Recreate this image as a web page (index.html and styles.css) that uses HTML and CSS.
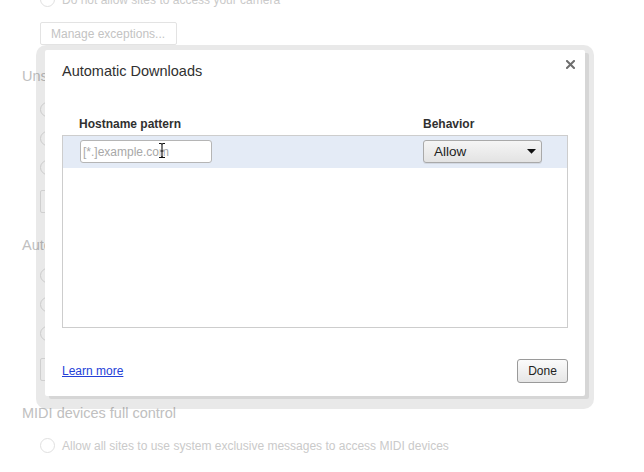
FILE: index.html
```html
<!DOCTYPE html>
<html lang="en">
<head>
<meta charset="utf-8">
<title>Automatic Downloads</title>
<link rel="stylesheet" href="styles.css">
</head>
<body>
<div class="settings">
  <div class="radio-row first"><span class="radio"></span><span>Do not allow sites to access your camera</span></div>
  <div class="ghost-btn btn-a">Manage exceptions...</div>

  <div class="section-title sec-a">Unsandboxed plugin access</div>
  <div class="radio-group grp-a">
    <div class="radio-row"><span class="radio"></span><span>Allow all sites to use a plugin to access your computer</span></div>
    <div class="radio-row"><span class="radio"></span><span>Ask when a site wants to use a plugin to access your computer</span></div>
    <div class="radio-row"><span class="radio"></span><span>Do not allow any sites to use a plugin to access your computer</span></div>
  </div>
  <div class="ghost-btn btn-b">Manage exceptions...</div>

  <div class="section-title sec-b">Automatic Downloads</div>
  <div class="radio-group grp-b">
    <div class="radio-row"><span class="radio"></span><span>Allow all sites to download multiple files automatically</span></div>
    <div class="radio-row"><span class="radio"></span><span>Ask when a site tries to download files automatically</span></div>
    <div class="radio-row"><span class="radio"></span><span>Do not allow any site to download multiple files automatically</span></div>
  </div>
  <div class="ghost-btn btn-c">Manage exceptions...</div>

  <div class="section-title sec-c">MIDI devices full control</div>
  <div class="radio-group grp-c">
    <div class="radio-row"><span class="radio"></span><span>Allow all sites to use system exclusive messages to access MIDI devices</span></div>
  </div>
</div>

<div class="frame">
  <div class="dialog">
    <h1 class="dialog-title">Automatic Downloads</h1>
    <button class="close" aria-label="Close">
      <svg width="9" height="9" viewBox="0 0 9 9"><path d="M1 1 L8 8 M8 1 L1 8" stroke="#6e6e6e" stroke-width="2" stroke-linecap="square"/></svg>
    </button>
    <div class="col-heads"><span>Hostname pattern</span><span>Behavior</span></div>
    <div class="list">
      <div class="list-row">
        <div class="cell-host">
          <input class="host-input" type="text" placeholder="[*.]example.com">
          <svg class="ibeam" width="10" height="17" viewBox="0 0 10 17">
            <path d="M2 1.5 H3.8 C4.8 1.5 5 2.3 5 3.2 V13.8 C5 14.7 4.8 15.5 3.8 15.5 H2 M8 1.5 H6.2 C5.2 1.5 5 2.3 5 3.2 M5 13.8 C5 14.7 5.2 15.5 6.2 15.5 H8 M3.5 9 H6.5" fill="none" stroke="#fff" stroke-width="3"/>
            <path d="M2 1.5 H3.8 C4.8 1.5 5 2.3 5 3.2 V13.8 C5 14.7 4.8 15.5 3.8 15.5 H2 M8 1.5 H6.2 C5.2 1.5 5 2.3 5 3.2 M5 13.8 C5 14.7 5.2 15.5 6.2 15.5 H8 M3.5 9 H6.5" fill="none" stroke="#111" stroke-width="1.1"/>
          </svg>
        </div>
        <div class="select"><span>Allow</span>
          <svg width="9" height="5" viewBox="0 0 9 5"><path d="M0 0 H9 L4.5 4.8 Z" fill="#111"/></svg>
        </div>
      </div>
    </div>
    <div class="dialog-foot">
      <a class="learn" href="#">Learn more</a>
      <button class="done">Done</button>
    </div>
  </div>
</div>
</body>
</html>
```
FILE: styles.css
```css
html, body {
  margin: 0;
  padding: 0;
}
body {
  width: 644px;
  height: 472px;
  overflow: hidden;
  position: relative;
  background: #ffffff;
  font-family: "Liberation Sans", Arial, sans-serif;
}

/* faded settings page underneath */
.settings {
  padding-left: 22px;
  display: flex;
  flex-direction: column;
  align-items: flex-start;
}
.radio-row {
  height: 29px;
  margin-left: 18px;
  display: flex;
  align-items: center;
  gap: 7px;
  font-size: 12px;
  color: #cacaca;
  white-space: nowrap;
}
.radio-row.first { margin-top: -15px; }
.radio {
  width: 15px;
  height: 15px;
  box-sizing: border-box;
  border: 1px solid #e0e0e0;
  border-radius: 50%;
  flex: none;
}
.ghost-btn {
  margin-left: 18px;
  width: 137px;
  height: 23px;
  box-sizing: border-box;
  border: 1px solid #e3e3e3;
  border-radius: 2px;
  padding-left: 10px;
  display: flex;
  align-items: center;
  font-size: 12px;
  color: #c3c3c3;
}
.btn-a { margin-top: 8px; }
.btn-b { margin-top: 8px; }
.btn-c { margin-top: 10px; }
.section-title {
  font-size: 14.5px;
  line-height: 20px;
  color: #c0c0c0;
}
.sec-a { margin-top: 21px; }
.sec-b { margin-top: 22px; }
.sec-c { margin-top: 22px; }
.grp-a { margin-top: 9px; }
.grp-b { margin-top: 6px; }
.grp-c { margin-top: 8px; }

/* dialog */
.frame {
  position: absolute;
  left: 36px;
  top: 45px;
  width: 558px;
  height: 364px;
  box-sizing: border-box;
  padding: 5px 9px 13px 9px;
  background: rgba(0, 0, 0, 0.085);
  border-radius: 10px;
}
.dialog {
  position: relative;
  width: 540px;
  height: 346px;
  box-sizing: border-box;
  padding: 12px 17px 13px 17px;
  background: #ffffff;
  border-radius: 2px;
  box-shadow: 4px 3px 0 rgba(0, 0, 0, 0.08);
  display: flex;
  flex-direction: column;
}
.dialog-title {
  margin: 0;
  font-size: 14.5px;
  line-height: 18px;
  font-weight: normal;
  color: #303030;
}
.close {
  position: absolute;
  top: 10px;
  right: 10px;
  width: 9px;
  height: 9px;
  padding: 0;
  border: 0;
  background: none;
  display: block;
}
.close svg { display: block; }
.col-heads {
  margin-top: 36px;
  padding-left: 17px;
  display: grid;
  grid-template-columns: 344px 1fr;
  font-size: 12px;
  line-height: 16px;
  font-weight: bold;
  color: #303030;
}
.list {
  margin-top: 3px;
  height: 193px;
  box-sizing: border-box;
  border: 1px solid #cdcdcd;
}
.list-row {
  height: 32px;
  box-sizing: border-box;
  padding: 4px 0 0 17px;
  background: #e4ebf6;
  display: grid;
  grid-template-columns: 343px 1fr;
  align-items: start;
}
.cell-host { position: relative; height: 23px; }
.host-input {
  display: block;
  width: 132px;
  height: 23px;
  box-sizing: border-box;
  margin: 0;
  padding: 0 2px;
  border: 1px solid #b5b5b5;
  border-radius: 3px;
  background: #ffffff;
  font-family: "Liberation Sans", Arial, sans-serif;
  font-size: 12px;
  color: #222;
  outline: none;
}
.host-input::placeholder { color: #a8a8a8; }
.ibeam {
  position: absolute;
  left: 77px;
  top: 2px;
}
.select {
  width: 119px;
  height: 23px;
  box-sizing: border-box;
  border: 1px solid #a9a9a9;
  border-radius: 3px;
  background: linear-gradient(#f5f5f5, #e3e3e3);
  box-shadow: 0 1px 0 rgba(0, 0, 0, 0.08);
  padding: 0 5px 0 10px;
  display: flex;
  align-items: center;
  justify-content: space-between;
  font-size: 13.5px;
  color: #222;
}
.select svg { display: block; }
.dialog-foot {
  margin-top: 31px;
  height: 24px;
  display: flex;
  align-items: center;
  justify-content: space-between;
}
.learn {
  font-size: 12px;
  color: #2440d8;
  text-decoration: underline;
}
.done {
  width: 51px;
  height: 24px;
  box-sizing: border-box;
  margin: 0;
  padding: 0;
  border: 1px solid #9a9a9a;
  border-radius: 3px;
  background: linear-gradient(#fbfbfb, #e6e6e6);
  font-family: "Liberation Sans", Arial, sans-serif;
  font-size: 12px;
  color: #222;
}
```
